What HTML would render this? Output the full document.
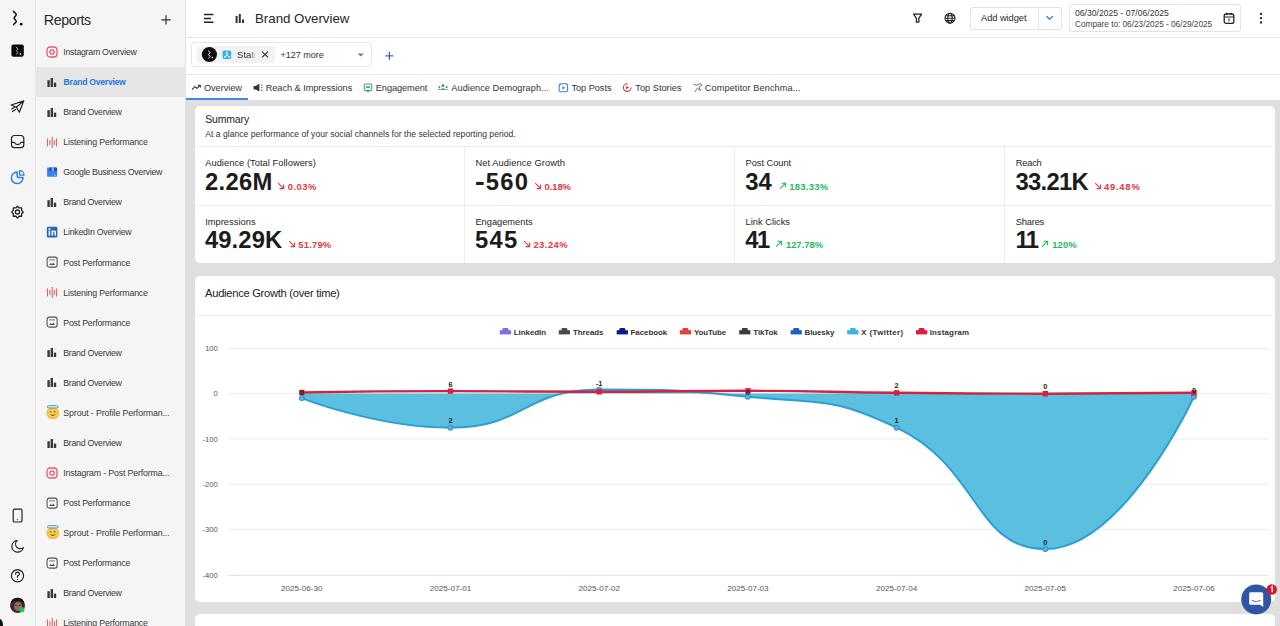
<!DOCTYPE html>
<html><head><meta charset="utf-8"><title>Brand Overview</title>
<style>
html,body{margin:0;padding:0;width:1280px;height:626px;overflow:hidden;background:#fff;font-family:"Liberation Sans", sans-serif;}
.t{position:absolute;white-space:nowrap;line-height:1;font-family:"Liberation Sans", sans-serif;}
</style></head><body>
<div style="position:absolute;left:0px;top:0px;width:35px;height:626px;background:#f5f5f5;"></div>
<div style="position:absolute;left:35px;top:0px;width:1px;height:626px;background:#e4e4e4;"></div>
<div style="position:absolute;left:36px;top:0px;width:150px;height:626px;background:#f5f5f5;"></div>
<div style="position:absolute;left:186px;top:0px;width:1094px;height:626px;background:#dfdfdf;"></div>
<div style="position:absolute;left:186px;top:0px;width:1094px;height:100px;background:#ffffff;"></div>
<div style="position:absolute;left:186px;top:37px;width:1094px;height:1px;background:#e6e6e6;"></div>
<div style="position:absolute;left:186px;top:74px;width:1094px;height:1px;background:#e6e6e6;"></div>
<div style="position:absolute;left:185px;top:0px;width:1px;height:626px;background:#e2e2e2;"></div>
<svg style="position:absolute;left:0;top:0" width="35" height="626" viewBox="0 0 35 626">
<path d="M13.5,11.4 L15.9,13.8 Q16.7,14.6 15.9,15.5 L14.4,17.2 Q13.7,18 14.4,18.8 L15.9,20.5 Q16.7,21.4 15.9,22.2 L13.6,24.6" fill="none" stroke="#111" stroke-width="1.5" stroke-linecap="round" stroke-linejoin="round"/>
<circle cx="21.2" cy="24.2" r="1.4" fill="#111"/>
<rect x="11.4" y="44.4" width="12.4" height="12.4" rx="2" fill="#0a0a0a"/>
<polyline points="16.2,47.2 18,49 16.4,50.8 18,52.6 16.3,54.2" fill="none" stroke="#aaa" stroke-width="1" stroke-linecap="round" stroke-linejoin="round"/>
<circle cx="20.4" cy="54" r="0.9" fill="#ccc"/>
<g fill="none" stroke="#222" stroke-width="1.2" stroke-linejoin="round" stroke-linecap="round">
 <path d="M23.8,100.9 L11.2,105 L16.4,107.3 L19.3,112.3 Z M16.4,107.3 L23.8,100.9"/>
 <path d="M11.8,109 L14.6,107.2 M12.4,111.6 L15.6,109.4"/>
 <rect x="11.5" y="135.5" width="12.3" height="12.2" rx="3"/>
 <path d="M11.6,142.4 H14.4 Q15.2,144.6 17.65,144.6 Q20.1,144.6 20.9,142.4 H23.7"/>
 <circle cx="17.47" cy="212.1" r="2.1" stroke-width="1.3"/>
 <path d="M17.47,206.20 L19.19,207.94 L21.64,207.93 L21.63,210.38 L23.37,212.10 L21.63,213.82 L21.64,216.27 L19.19,216.26 L17.47,218.00 L15.75,216.26 L13.30,216.27 L13.31,213.82 L11.57,212.10 L13.31,210.38 L13.30,207.93 L15.75,207.94Z" stroke-width="1.3"/>
 <rect x="13.2" y="509.2" width="8.8" height="12.8" rx="1.6"/>
 <path d="M17.2,540.6 A5.8,5.8 0 1 0 23.3,547.6 A4.6,4.6 0 0 1 17.2,540.6 Z" />
 <circle cx="17.5" cy="575.8" r="6.1"/>
 <path d="M15.6,574.2 Q15.6,572.2 17.5,572.2 Q19.4,572.2 19.4,574 Q19.4,575.4 17.5,576 V577.2"/>
</g>
<circle cx="17.5" cy="579.6" r="0.7" fill="#222"/>
<circle cx="17.6" cy="519.6" r="0.6" fill="#222"/>
<g fill="none" stroke="#2f7be6" stroke-width="1.5" stroke-linejoin="round">
 <path d="M17.2,172 V175.8 Q17.2,177.6 19,177.6 H23 A5.8,5.8 0 1 1 17.2,172 Z"/>
 <path d="M19.6,170.7 A4.4,4.4 0 0 1 24,175.1 H19.6 Z" stroke-width="1.3"/>
</g>
<circle cx="17.5" cy="605.4" r="7.5" fill="#3a2a28"/>
<ellipse cx="18" cy="606.4" rx="4" ry="4.6" fill="#9a6a5e"/>
<path d="M10.5,604 Q11.5,597.6 17.5,597.8 Q23.5,597.6 24.5,604 Q22.5,600.4 17.5,601 Q12.5,600.6 10.5,604Z" fill="#1e1512"/>
<path d="M14.8,605.6 h2 M18.6,605.6 h2" stroke="#3a2020" stroke-width="0.8"/>
<circle cx="21.8" cy="609.6" r="2.7" fill="#1fbf5c"/>
</svg>
<div class="t" id="T0" style="left:43.80px;top:12.88px;font-size:14.2px;font-weight:400;color:#2a2a2a;letter-spacing:-0.397px;">Reports</div>
<svg style="position:absolute;left:160px;top:14px" width="12" height="12"><path d="M6,1.2 V10.4 M1.4,5.8 H10.6" stroke="#333" stroke-width="1.2"/></svg>
<div style="position:absolute;left:36px;top:67px;width:150px;height:30px;background:#e6e6e6;"></div>
<svg style="position:absolute;left:46px;top:45.60px" width="12" height="12" viewBox="0 0 12 12"><rect x="1" y="1" width="10" height="10" rx="3" fill="none" stroke="#e25d72" stroke-width="1.3"/><circle cx="6" cy="6" r="2.2" fill="none" stroke="#e25d72" stroke-width="1.3"/></svg>
<div class="t" id="T1" style="left:63.30px;top:47.95px;font-size:8.8px;font-weight:400;color:#3a3a3a;letter-spacing:-0.274px;">Instagram Overview</div>
<svg style="position:absolute;left:46px;top:75.68px" width="12" height="12" viewBox="0 0 12 12"><rect x="1.4" y="4.2" width="2.4" height="6.8" fill="#3a3a3a"/><rect x="4.6" y="2" width="2.4" height="9" fill="#3a3a3a"/><rect x="7.8" y="6.6" width="2.4" height="4.4" fill="#3a3a3a"/></svg>
<div class="t" id="T2" style="left:63.60px;top:78.00px;font-size:8.6px;font-weight:700;color:#1f74dc;letter-spacing:-0.250px;">Brand Overview</div>
<svg style="position:absolute;left:46px;top:105.76px" width="12" height="12" viewBox="0 0 12 12"><rect x="1.4" y="4.2" width="2.4" height="6.8" fill="#3a3a3a"/><rect x="4.6" y="2" width="2.4" height="9" fill="#3a3a3a"/><rect x="7.8" y="6.6" width="2.4" height="4.4" fill="#3a3a3a"/></svg>
<div class="t" id="T3" style="left:63.30px;top:108.11px;font-size:8.8px;font-weight:400;color:#3a3a3a;letter-spacing:-0.302px;">Brand Overview</div>
<svg style="position:absolute;left:46px;top:135.84px" width="12" height="12" viewBox="0 0 12 12"><g stroke="#e4605e" stroke-width="1.05" stroke-linecap="round"><path d="M1.5,2.8 V10"/><path d="M3.9,4.6 V8.4"/><path d="M6.2,1.2 V11.6"/><path d="M8.4,4.6 V8.4"/><path d="M10.6,2.8 V10"/></g></svg>
<div class="t" id="T4" style="left:63.30px;top:138.19px;font-size:8.8px;font-weight:400;color:#3a3a3a;letter-spacing:-0.166px;">Listening Performance</div>
<svg style="position:absolute;left:46px;top:165.92px" width="12" height="12" viewBox="0 0 12 12"><rect x="1.1" y="1.6" width="10" height="9.2" rx="0.8" fill="#3b80e8"/><path d="M3.4,1.6 h2.3 v3.2 q-1.15,1.2 -2.3,0Z" fill="#2451b8"/><path d="M5.7,1.6 h2.3 v3.2 q-1.15,1.2 -2.3,0Z" fill="#6ea6f4"/><path d="M8,1.6 h2.3 q0.8,0.4 0.8,1.2 v2 q-1.5,1.2 -3.1,0Z" fill="#2451b8"/><path d="M8.2,8.2 q0.6,1.2 1.6,1.4" stroke="#cfe0fb" stroke-width="0.7" fill="none"/></svg>
<div class="t" id="T5" style="left:63.30px;top:168.27px;font-size:8.8px;font-weight:400;color:#3a3a3a;letter-spacing:-0.285px;">Google Business Overview</div>
<svg style="position:absolute;left:46px;top:196.00px" width="12" height="12" viewBox="0 0 12 12"><rect x="1.4" y="4.2" width="2.4" height="6.8" fill="#3a3a3a"/><rect x="4.6" y="2" width="2.4" height="9" fill="#3a3a3a"/><rect x="7.8" y="6.6" width="2.4" height="4.4" fill="#3a3a3a"/></svg>
<div class="t" id="T6" style="left:63.30px;top:198.35px;font-size:8.8px;font-weight:400;color:#3a3a3a;letter-spacing:-0.302px;">Brand Overview</div>
<svg style="position:absolute;left:46px;top:226.08px" width="12" height="12" viewBox="0 0 12 12"><rect x="0.8" y="0.8" width="10.6" height="10.6" rx="1.2" fill="#2a66b8"/><rect x="2.6" y="4.6" width="1.6" height="5" fill="#fff"/><circle cx="3.4" cy="3" r="0.95" fill="#fff"/><path d="M5.6,9.6 V4.6 H7 V5.4 Q7.6,4.4 8.8,4.5 Q10,4.6 10,6.2 V9.6 H8.5 V6.6 Q8.5,5.8 7.8,5.8 Q7.1,5.8 7.1,6.8 V9.6Z" fill="#fff"/></svg>
<div class="t" id="T7" style="left:63.30px;top:228.43px;font-size:8.8px;font-weight:400;color:#3a3a3a;letter-spacing:-0.251px;">LinkedIn Overview</div>
<svg style="position:absolute;left:46px;top:256.16px" width="12" height="12" viewBox="0 0 12 12"><rect x="1.1" y="1.1" width="10" height="10" rx="2.2" fill="none" stroke="#505050" stroke-width="1.05"/><path d="M3.2,3.9 H9" stroke="#666" stroke-width="0.9"/><path d="M3.2,9.1 L4.8,7 L6,8.2 L7.2,6.6 L9,9.1Z" fill="#505050"/></svg>
<div class="t" id="T8" style="left:63.30px;top:258.51px;font-size:8.8px;font-weight:400;color:#3a3a3a;letter-spacing:-0.228px;">Post Performance</div>
<svg style="position:absolute;left:46px;top:286.24px" width="12" height="12" viewBox="0 0 12 12"><g stroke="#e4605e" stroke-width="1.05" stroke-linecap="round"><path d="M1.5,2.8 V10"/><path d="M3.9,4.6 V8.4"/><path d="M6.2,1.2 V11.6"/><path d="M8.4,4.6 V8.4"/><path d="M10.6,2.8 V10"/></g></svg>
<div class="t" id="T9" style="left:63.30px;top:288.59px;font-size:8.8px;font-weight:400;color:#3a3a3a;letter-spacing:-0.166px;">Listening Performance</div>
<svg style="position:absolute;left:46px;top:316.32px" width="12" height="12" viewBox="0 0 12 12"><rect x="1.1" y="1.1" width="10" height="10" rx="2.2" fill="none" stroke="#505050" stroke-width="1.05"/><path d="M3.2,3.9 H9" stroke="#666" stroke-width="0.9"/><path d="M3.2,9.1 L4.8,7 L6,8.2 L7.2,6.6 L9,9.1Z" fill="#505050"/></svg>
<div class="t" id="T10" style="left:63.30px;top:318.67px;font-size:8.8px;font-weight:400;color:#3a3a3a;letter-spacing:-0.228px;">Post Performance</div>
<svg style="position:absolute;left:46px;top:346.40px" width="12" height="12" viewBox="0 0 12 12"><rect x="1.4" y="4.2" width="2.4" height="6.8" fill="#3a3a3a"/><rect x="4.6" y="2" width="2.4" height="9" fill="#3a3a3a"/><rect x="7.8" y="6.6" width="2.4" height="4.4" fill="#3a3a3a"/></svg>
<div class="t" id="T11" style="left:63.30px;top:348.75px;font-size:8.8px;font-weight:400;color:#3a3a3a;letter-spacing:-0.302px;">Brand Overview</div>
<svg style="position:absolute;left:46px;top:376.48px" width="12" height="12" viewBox="0 0 12 12"><rect x="1.4" y="4.2" width="2.4" height="6.8" fill="#3a3a3a"/><rect x="4.6" y="2" width="2.4" height="9" fill="#3a3a3a"/><rect x="7.8" y="6.6" width="2.4" height="4.4" fill="#3a3a3a"/></svg>
<div class="t" id="T12" style="left:63.30px;top:378.83px;font-size:8.8px;font-weight:400;color:#3a3a3a;letter-spacing:-0.302px;">Brand Overview</div>
<svg style="position:absolute;left:45.8px;top:404.96px" width="13.6" height="13.6" viewBox="0 0 12 12"><circle cx="6" cy="7" r="5.6" fill="#f2b736"/><circle cx="6" cy="6.6" r="5" fill="#f8c94e"/><ellipse cx="6" cy="1.6" rx="4.8" ry="1.3" fill="none" stroke="#5aa8f0" stroke-width="1"/><path d="M3.2,6.2 Q4.1,5.3 5,6.2 M7,6.2 Q7.9,5.3 8.8,6.2" stroke="#6b4a10" stroke-width="0.7" fill="none"/><path d="M3.4,8.2 Q6,11 8.6,8.2 Q6,9.2 3.4,8.2Z" fill="#6b4a10"/></svg>
<div class="t" id="T13" style="left:63.30px;top:408.91px;font-size:8.8px;font-weight:400;color:#3a3a3a;letter-spacing:-0.113px;">Sprout - Profile Performan...</div>
<svg style="position:absolute;left:46px;top:436.64px" width="12" height="12" viewBox="0 0 12 12"><rect x="1.4" y="4.2" width="2.4" height="6.8" fill="#3a3a3a"/><rect x="4.6" y="2" width="2.4" height="9" fill="#3a3a3a"/><rect x="7.8" y="6.6" width="2.4" height="4.4" fill="#3a3a3a"/></svg>
<div class="t" id="T14" style="left:63.30px;top:438.99px;font-size:8.8px;font-weight:400;color:#3a3a3a;letter-spacing:-0.302px;">Brand Overview</div>
<svg style="position:absolute;left:46px;top:466.72px" width="12" height="12" viewBox="0 0 12 12"><rect x="1" y="1" width="10" height="10" rx="3" fill="none" stroke="#e25d72" stroke-width="1.3"/><circle cx="6" cy="6" r="2.2" fill="none" stroke="#e25d72" stroke-width="1.3"/></svg>
<div class="t" id="T15" style="left:63.30px;top:469.07px;font-size:8.8px;font-weight:400;color:#3a3a3a;letter-spacing:-0.157px;">Instagram - Post Performa...</div>
<svg style="position:absolute;left:46px;top:496.80px" width="12" height="12" viewBox="0 0 12 12"><rect x="1.1" y="1.1" width="10" height="10" rx="2.2" fill="none" stroke="#505050" stroke-width="1.05"/><path d="M3.2,3.9 H9" stroke="#666" stroke-width="0.9"/><path d="M3.2,9.1 L4.8,7 L6,8.2 L7.2,6.6 L9,9.1Z" fill="#505050"/></svg>
<div class="t" id="T16" style="left:63.30px;top:499.15px;font-size:8.8px;font-weight:400;color:#3a3a3a;letter-spacing:-0.228px;">Post Performance</div>
<svg style="position:absolute;left:45.8px;top:525.28px" width="13.6" height="13.6" viewBox="0 0 12 12"><circle cx="6" cy="7" r="5.6" fill="#f2b736"/><circle cx="6" cy="6.6" r="5" fill="#f8c94e"/><ellipse cx="6" cy="1.6" rx="4.8" ry="1.3" fill="none" stroke="#5aa8f0" stroke-width="1"/><path d="M3.2,6.2 Q4.1,5.3 5,6.2 M7,6.2 Q7.9,5.3 8.8,6.2" stroke="#6b4a10" stroke-width="0.7" fill="none"/><path d="M3.4,8.2 Q6,11 8.6,8.2 Q6,9.2 3.4,8.2Z" fill="#6b4a10"/></svg>
<div class="t" id="T17" style="left:63.30px;top:529.23px;font-size:8.8px;font-weight:400;color:#3a3a3a;letter-spacing:-0.113px;">Sprout - Profile Performan...</div>
<svg style="position:absolute;left:46px;top:556.96px" width="12" height="12" viewBox="0 0 12 12"><rect x="1.1" y="1.1" width="10" height="10" rx="2.2" fill="none" stroke="#505050" stroke-width="1.05"/><path d="M3.2,3.9 H9" stroke="#666" stroke-width="0.9"/><path d="M3.2,9.1 L4.8,7 L6,8.2 L7.2,6.6 L9,9.1Z" fill="#505050"/></svg>
<div class="t" id="T18" style="left:63.30px;top:559.31px;font-size:8.8px;font-weight:400;color:#3a3a3a;letter-spacing:-0.228px;">Post Performance</div>
<svg style="position:absolute;left:46px;top:587.04px" width="12" height="12" viewBox="0 0 12 12"><rect x="1.4" y="4.2" width="2.4" height="6.8" fill="#3a3a3a"/><rect x="4.6" y="2" width="2.4" height="9" fill="#3a3a3a"/><rect x="7.8" y="6.6" width="2.4" height="4.4" fill="#3a3a3a"/></svg>
<div class="t" id="T19" style="left:63.30px;top:589.39px;font-size:8.8px;font-weight:400;color:#3a3a3a;letter-spacing:-0.302px;">Brand Overview</div>
<svg style="position:absolute;left:46px;top:617.12px" width="12" height="12" viewBox="0 0 12 12"><g stroke="#e4605e" stroke-width="1.05" stroke-linecap="round"><path d="M1.5,2.8 V10"/><path d="M3.9,4.6 V8.4"/><path d="M6.2,1.2 V11.6"/><path d="M8.4,4.6 V8.4"/><path d="M10.6,2.8 V10"/></g></svg>
<div class="t" id="T20" style="left:63.30px;top:619.47px;font-size:8.8px;font-weight:400;color:#3a3a3a;letter-spacing:-0.166px;">Listening Performance</div>
<svg style="position:absolute;left:200px;top:10px" width="18" height="16"><path d="M4,4.6 H13.4 M4,8.4 H11 M4,12.2 H13.4" stroke="#222" stroke-width="1.5"/></svg>
<svg style="position:absolute;left:234px;top:13px" width="12" height="11"><rect x="1.6" y="3" width="2" height="7" fill="#333"/><rect x="4.8" y="1" width="2" height="9" fill="#333"/><rect x="8" y="6.4" width="2" height="3.6" fill="#333"/></svg>
<div class="t" id="T21" style="left:255.00px;top:11.54px;font-size:13.3px;font-weight:400;color:#262626;letter-spacing:-0.014px;">Brand Overview</div>
<svg style="position:absolute;left:908px;top:8px" width="60" height="20">
<path d="M5.6,6.2 H13.6 L10.8,10.4 V14.2 H8.4 V10.4 Z" fill="none" stroke="#222" stroke-width="1.3" stroke-linejoin="round"/>
<g transform="translate(42,10.2)" fill="none" stroke="#222" stroke-width="1.1">
<circle r="5"/><ellipse rx="2.2" ry="5"/><path d="M-5,0 H5 M-4.4,-2.4 H4.4 M-4.4,2.4 H4.4"/>
</g></svg>
<div style="position:absolute;left:970px;top:7px;width:92px;height:23px;background:#fff;border:1px solid #e3e3e3;border-radius:3px;box-sizing:border-box;"></div>
<div style="position:absolute;left:1037.5px;top:7.5px;width:1px;height:21.5px;background:#e3e3e3;"></div>
<div class="t" id="T22" style="left:981.00px;top:14.33px;font-size:9.3px;font-weight:400;color:#2a2a2a;letter-spacing:-0.057px;">Add widget</div>
<svg style="position:absolute;left:1044px;top:14px" width="12" height="8"><path d="M2.4,2.2 L5.6,5.2 L8.8,2.2" fill="none" stroke="#3b6dc2" stroke-width="1.2"/></svg>
<div style="position:absolute;left:1069px;top:4px;width:172px;height:28px;background:#fff;border:1px solid #e3e3e3;border-radius:3px;box-sizing:border-box;"></div>
<div class="t" id="T23" style="left:1075.00px;top:8.92px;font-size:8.6px;font-weight:400;color:#333;letter-spacing:0.005px;">06/30/2025 - 07/06/2025</div>
<div class="t" id="T24" style="left:1075.00px;top:20.72px;font-size:8.25px;font-weight:400;color:#444;letter-spacing:-0.012px;">Compare to: 06/23/2025 - 06/29/2025</div>
<svg style="position:absolute;left:1222px;top:11px" width="14" height="14">
<rect x="2.2" y="3" width="9.6" height="9.4" rx="2" fill="none" stroke="#222" stroke-width="1.3"/>
<path d="M2.4,6 H11.6 M4.8,1.8 V4 M9.2,1.8 V4" stroke="#222" stroke-width="1.2"/>
<path d="M7,7.4 V10.4" stroke="#222" stroke-width="1"/></svg>
<svg style="position:absolute;left:1256px;top:10px" width="10" height="16"><circle cx="5" cy="3.9" r="1.15" fill="#222"/><circle cx="5" cy="8.2" r="1.15" fill="#222"/><circle cx="5" cy="12.5" r="1.15" fill="#222"/></svg>
<div style="position:absolute;left:191px;top:42px;width:181px;height:25px;background:#fff;border:1px solid #e6e6e6;border-radius:4px;box-sizing:border-box;"></div>
<div style="position:absolute;left:197px;top:46px;width:78px;height:17px;background:#f3f3f3;border-radius:3px;"></div>
<svg style="position:absolute;left:200px;top:45px" width="80" height="20">
<circle cx="9.4" cy="9.5" r="7.6" fill="#0d0d0d"/>
<polyline points="8.2,5.8 10.2,7.6 8.4,9.6 10.2,11.4 8.3,13.2" fill="none" stroke="#fff" stroke-width="1" stroke-linejoin="round"/>
<circle cx="12.4" cy="12.6" r="0.8" fill="#fff"/>
<rect x="22.6" y="5.6" width="8.6" height="8.4" rx="1.6" fill="#2cb4f2"/>
<path d="M26.9,7.6 V9.8 M26.9,9.8 L24.8,11.8 M26.9,9.8 L29,11.8" fill="none" stroke="#fff" stroke-width="0.9"/>
<circle cx="26.9" cy="7.6" r="0.9" fill="#fff"/><circle cx="24.8" cy="11.8" r="0.9" fill="#fff"/><circle cx="29" cy="11.8" r="0.9" fill="#fff"/>
<path d="M62,6.6 L68,12.4 M68,6.6 L62,12.4" stroke="#333" stroke-width="1.1"/>
</svg>
<div class="t" style="left:237px;top:47.6px;font-size:9.6px;color:#2e2e2e;width:19px;overflow:hidden;line-height:14px;-webkit-mask-image:linear-gradient(90deg,#000 70%,transparent)">Status</div>
<div class="t" id="T25" style="left:280.40px;top:50.90px;font-size:9.1px;font-weight:400;color:#333;letter-spacing:-0.034px;">+127 more</div>
<svg style="position:absolute;left:355px;top:51px" width="12" height="8"><path d="M2.6,2.4 H8.8 L5.7,5.6Z" fill="#777"/></svg>
<svg style="position:absolute;left:382px;top:49px" width="14" height="14"><path d="M7.4,2.8 V10.8 M3.4,6.8 H11.4" stroke="#3f66c0" stroke-width="1.3"/></svg>
<div class="t" id="T26" style="left:203.90px;top:83.81px;font-size:9.2px;font-weight:400;color:#333;letter-spacing:-0.036px;">Overview</div>
<div class="t" id="T27" style="left:265.70px;top:83.81px;font-size:9.2px;font-weight:400;color:#333;letter-spacing:-0.040px;">Reach &amp; Impressions</div>
<div class="t" id="T28" style="left:375.80px;top:83.81px;font-size:9.2px;font-weight:400;color:#333;letter-spacing:-0.061px;">Engagement</div>
<div class="t" id="T29" style="left:451.30px;top:83.81px;font-size:9.2px;font-weight:400;color:#333;letter-spacing:0.051px;">Audience Demograph...</div>
<div class="t" id="T30" style="left:571.50px;top:83.81px;font-size:9.2px;font-weight:400;color:#333;letter-spacing:-0.044px;">Top Posts</div>
<div class="t" id="T31" style="left:635.30px;top:83.81px;font-size:9.2px;font-weight:400;color:#333;letter-spacing:0.024px;">Top Stories</div>
<div class="t" id="T32" style="left:704.80px;top:83.81px;font-size:9.2px;font-weight:400;color:#333;letter-spacing:0.090px;">Competitor Benchma...</div>
<svg style="position:absolute;left:186px;top:78px" width="640" height="20" viewBox="186 78 640 20">
<path d="M192,89.6 L195,86.6 L197,88.4 L200.2,85.4 M198,85.4 H200.4 V87.6" fill="none" stroke="#333" stroke-width="1.1" stroke-linejoin="round"/>
<path d="M253.6,86 H255.6 L259.4,83.8 V91.6 L255.6,89.4 H253.6Z" fill="#333"/><path d="M261,85.4 L262.2,84.8 M261.2,87.7 H262.6 M261,90 L262.2,90.6" stroke="#333" stroke-width="0.9"/>
<rect x="364.2" y="84" width="7.6" height="6.6" rx="1.4" fill="none" stroke="#3daa6a" stroke-width="1.1"/><path d="M366.6,90.6 L368,92 L369.4,90.6" fill="none" stroke="#3daa6a" stroke-width="1"/><rect x="366.2" y="86.2" width="3.6" height="2" fill="#3daa6a"/>
<g fill="#3d8f63"><circle cx="443" cy="85.6" r="1.4"/><path d="M440.4,90 Q443,86.4 445.6,90Z"/><circle cx="439.4" cy="87" r="1"/><circle cx="446.6" cy="87" r="1"/><path d="M437.6,90 Q439.4,87.8 440.8,89.4Z M445.2,89.4 Q446.6,87.8 448.4,90Z"/></g>
<rect x="559.2" y="83.8" width="8.4" height="8" rx="1.8" fill="none" stroke="#3b82d4" stroke-width="1.1"/><path d="M562.4,86.2 L565.4,87.8 L562.4,89.6Z" fill="#3b82d4"/><path d="M560.6,83.8 V85 M566.2,83.8 V85" stroke="#3b82d4" stroke-width="0.9"/>
<circle cx="627.2" cy="87.6" r="3.8" fill="none" stroke="#e0373a" stroke-width="1.1" stroke-dasharray="18 5"/><path d="M626.2,85.8 L629,87.6 L626.2,89.4Z" fill="#e0373a"/>
<path d="M693.6,84.4 L697,85.2 L700,83.6 L702,85 L698.8,87.2 L700.6,90.6 L697.2,88.4 L694.6,92" fill="none" stroke="#777" stroke-width="1"/>
</svg>
<div style="position:absolute;left:186px;top:97.7px;width:61.5px;height:2.2px;background:#3d8ae5;"></div>
<div style="position:absolute;left:195px;top:106.3px;width:1080px;height:156.7px;background:#fff;border-radius:5px;"></div>
<div class="t" id="T33" style="left:205.20px;top:115.15px;font-size:10.45px;font-weight:400;color:#1e1e1e;letter-spacing:-0.123px;">Summary</div>
<div class="t" id="T34" style="left:205.20px;top:129.52px;font-size:8.6px;font-weight:400;color:#333;letter-spacing:0.012px;">At a glance performance of your social channels for the selected reporting period.</div>
<div style="position:absolute;left:195px;top:146px;width:1080px;height:1px;background:#ececec;"></div>
<div style="position:absolute;left:195px;top:205px;width:1080px;height:1px;background:#ececec;"></div>
<div style="position:absolute;left:464px;top:146.5px;width:1px;height:116.5px;background:#ececec;"></div>
<div style="position:absolute;left:734px;top:146.5px;width:1px;height:116.5px;background:#ececec;"></div>
<div style="position:absolute;left:1004px;top:146.5px;width:1px;height:116.5px;background:#ececec;"></div>
<div class="t" id="T35" style="left:205.20px;top:159.03px;font-size:9.3px;font-weight:400;color:#262626;letter-spacing:0.042px;">Audience (Total Followers)</div>
<div class="t" id="T36" style="left:204.90px;top:169.75px;font-size:23.8px;font-weight:700;color:#1c1c1c;letter-spacing:0.321px;">2.26M</div>
<svg style="position:absolute;left:277.0px;top:182.1px" width="9" height="9"><path d="M1.2,1.2 L6.6,6.6 M2.6,6.6 H6.6 V2.6" fill="none" stroke="#e1373d" stroke-width="1.1"/></svg>
<div class="t" id="T37" style="left:287.80px;top:181.54px;font-size:9.4px;font-weight:700;color:#e1373d;letter-spacing:0.488px;">0.03%</div>
<div class="t" id="T38" style="left:475.40px;top:159.03px;font-size:9.3px;font-weight:400;color:#262626;letter-spacing:0.089px;">Net Audience Growth</div>
<div class="t" id="T39" style="left:475.10px;top:169.75px;font-size:23.8px;font-weight:700;color:#1c1c1c;letter-spacing:1.300px;"><span style="display:inline-block;transform:scale(1.25,1.1);transform-origin:0 70%;margin-right:1.4px">-</span>560</div>
<svg style="position:absolute;left:533.8px;top:182.1px" width="9" height="9"><path d="M1.2,1.2 L6.6,6.6 M2.6,6.6 H6.6 V2.6" fill="none" stroke="#e1373d" stroke-width="1.1"/></svg>
<div class="t" id="T40" style="left:544.50px;top:181.54px;font-size:9.4px;font-weight:700;color:#e1373d;letter-spacing:-0.037px;">0.18%</div>
<div class="t" id="T41" style="left:745.60px;top:159.03px;font-size:9.3px;font-weight:400;color:#262626;letter-spacing:-0.046px;">Post Count</div>
<div class="t" id="T42" style="left:745.30px;top:169.75px;font-size:23.8px;font-weight:700;color:#1c1c1c;letter-spacing:-0.135px;">34</div>
<svg style="position:absolute;left:778.6px;top:182.1px" width="9" height="9"><path d="M1.2,6.6 L6.6,1.2 M2.6,1.2 H6.6 V5.2" fill="none" stroke="#1fb866" stroke-width="1.1"/></svg>
<div class="t" id="T43" style="left:789.30px;top:181.54px;font-size:9.4px;font-weight:700;color:#1fb866;letter-spacing:0.304px;">183.33%</div>
<div class="t" id="T44" style="left:1015.80px;top:159.03px;font-size:9.3px;font-weight:400;color:#262626;letter-spacing:-0.226px;">Reach</div>
<div class="t" id="T45" style="left:1015.50px;top:169.75px;font-size:23.8px;font-weight:700;color:#1c1c1c;letter-spacing:-0.710px;">33.21K</div>
<svg style="position:absolute;left:1094.0px;top:182.1px" width="9" height="9"><path d="M1.2,1.2 L6.6,6.6 M2.6,6.6 H6.6 V2.6" fill="none" stroke="#e1373d" stroke-width="1.1"/></svg>
<div class="t" id="T46" style="left:1103.90px;top:181.54px;font-size:9.4px;font-weight:700;color:#e1373d;letter-spacing:0.808px;">49.48%</div>
<div class="t" id="T47" style="left:205.20px;top:218.03px;font-size:9.3px;font-weight:400;color:#262626;letter-spacing:0.023px;">Impressions</div>
<div class="t" id="T48" style="left:204.90px;top:227.75px;font-size:23.8px;font-weight:700;color:#1c1c1c;letter-spacing:0.130px;">49.29K</div>
<svg style="position:absolute;left:288.0px;top:240.1px" width="9" height="9"><path d="M1.2,1.2 L6.6,6.6 M2.6,6.6 H6.6 V2.6" fill="none" stroke="#e1373d" stroke-width="1.1"/></svg>
<div class="t" id="T49" style="left:298.30px;top:239.54px;font-size:9.4px;font-weight:700;color:#e1373d;letter-spacing:0.208px;">51.79%</div>
<div class="t" id="T50" style="left:475.40px;top:218.03px;font-size:9.3px;font-weight:400;color:#262626;letter-spacing:-0.012px;">Engagements</div>
<div class="t" id="T51" style="left:475.10px;top:227.75px;font-size:23.8px;font-weight:700;color:#1c1c1c;letter-spacing:1.165px;">545</div>
<svg style="position:absolute;left:523.0px;top:240.1px" width="9" height="9"><path d="M1.2,1.2 L6.6,6.6 M2.6,6.6 H6.6 V2.6" fill="none" stroke="#e1373d" stroke-width="1.1"/></svg>
<div class="t" id="T52" style="left:533.40px;top:239.54px;font-size:9.4px;font-weight:700;color:#e1373d;letter-spacing:0.488px;">23.24%</div>
<div class="t" id="T53" style="left:745.60px;top:218.03px;font-size:9.3px;font-weight:400;color:#262626;letter-spacing:-0.008px;">Link Clicks</div>
<div class="t" id="T54" style="left:745.30px;top:227.75px;font-size:23.8px;font-weight:700;color:#1c1c1c;letter-spacing:-1.600px;">41</div>
<svg style="position:absolute;left:774.7px;top:240.1px" width="9" height="9"><path d="M1.2,6.6 L6.6,1.2 M2.6,1.2 H6.6 V5.2" fill="none" stroke="#1fb866" stroke-width="1.1"/></svg>
<div class="t" id="T55" style="left:785.90px;top:239.54px;font-size:9.4px;font-weight:700;color:#1fb866;letter-spacing:0.021px;">127.78%</div>
<div class="t" id="T56" style="left:1015.80px;top:218.03px;font-size:9.3px;font-weight:400;color:#262626;letter-spacing:-0.202px;">Shares</div>
<div class="t" id="T57" style="left:1015.50px;top:227.75px;font-size:23.8px;font-weight:700;color:#1c1c1c;letter-spacing:-1.600px;">11</div>
<svg style="position:absolute;left:1041.3px;top:240.1px" width="9" height="9"><path d="M1.2,6.6 L6.6,1.2 M2.6,1.2 H6.6 V5.2" fill="none" stroke="#1fb866" stroke-width="1.1"/></svg>
<div class="t" id="T58" style="left:1052.30px;top:239.54px;font-size:9.4px;font-weight:700;color:#1fb866;letter-spacing:0.086px;">120%</div>
<div style="position:absolute;left:195px;top:276px;width:1080px;height:325.5px;background:#fff;border-radius:5px;"></div>
<div class="t" id="T59" style="left:205.10px;top:288.02px;font-size:11.2px;font-weight:400;color:#222;letter-spacing:-0.295px;">Audience Growth (over time)</div>
<div style="position:absolute;left:195px;top:315px;width:1080px;height:1px;background:#ececec;"></div>
<div style="position:absolute;left:195px;top:614px;width:1080px;height:20px;background:#fff;border-radius:5px;"></div>
<svg style="position:absolute;left:0;top:0" width="1280" height="626" viewBox="0 0 1280 626">
<rect x="499.8" y="330.2" width="11.2" height="4.2" fill="#7b6cf0"/><rect x="502.40000000000003" y="328" width="6" height="3" rx="1.2" fill="#7b6cf0"/>
<rect x="558.8" y="330.2" width="11.2" height="4.2" fill="#4a4a4a"/><rect x="561.4" y="328" width="6" height="3" rx="1.2" fill="#4a4a4a"/>
<rect x="616.7" y="330.2" width="11.2" height="4.2" fill="#0b1a8a"/><rect x="619.3000000000001" y="328" width="6" height="3" rx="1.2" fill="#0b1a8a"/>
<rect x="679.8" y="330.2" width="11.2" height="4.2" fill="#e2403f"/><rect x="682.4" y="328" width="6" height="3" rx="1.2" fill="#e2403f"/>
<rect x="739.2" y="330.2" width="11.2" height="4.2" fill="#3a3a3a"/><rect x="741.8000000000001" y="328" width="6" height="3" rx="1.2" fill="#3a3a3a"/>
<rect x="790.6" y="330.2" width="11.2" height="4.2" fill="#1f5fc0"/><rect x="793.2" y="328" width="6" height="3" rx="1.2" fill="#1f5fc0"/>
<rect x="847.2" y="330.2" width="11.2" height="4.2" fill="#3bb3e3"/><rect x="849.8000000000001" y="328" width="6" height="3" rx="1.2" fill="#3bb3e3"/>
<rect x="916" y="330.2" width="11.2" height="4.2" fill="#d81c3c"/><rect x="918.6" y="328" width="6" height="3" rx="1.2" fill="#d81c3c"/>
<rect x="227.7" y="348.1" width="1041.3" height="1" fill="#ececec"/>
<rect x="227.7" y="393.1" width="1041.3" height="1" fill="#ececec"/>
<rect x="227.7" y="438.4" width="1041.3" height="1" fill="#ececec"/>
<rect x="227.7" y="483.7" width="1041.3" height="1" fill="#ececec"/>
<rect x="227.7" y="528.9" width="1041.3" height="1" fill="#ececec"/>
<rect x="227.7" y="574.8" width="1041.3" height="1" fill="#d8e1f0"/>
<path d="M301.80,398.10 C301.80,398.10 376.61,427.70 450.50,427.70 C525.31,427.70 523.71,389.60 599.20,389.60 C672.41,389.60 674.30,389.60 747.90,396.70 C823.00,403.94 830.91,396.70 896.60,427.70 C979.61,466.88 974.80,549.10 1045.30,549.10 C1123.50,549.10 1194.00,396.70 1194.00,396.70 L1194.00,393.6 L301.80,393.6 Z" fill="#5bc0e0"/>
<path d="M301.80,398.10 C301.80,398.10 376.61,427.70 450.50,427.70 C525.31,427.70 523.71,389.60 599.20,389.60 C672.41,389.60 674.30,389.60 747.90,396.70 C823.00,403.94 830.91,396.70 896.60,427.70 C979.61,466.88 974.80,549.10 1045.30,549.10 C1123.50,549.10 1194.00,396.70 1194.00,396.70" fill="none" stroke="#2a9ed6" stroke-width="2"/>
<path d="M301.80,392.50 C301.80,392.50 376.15,391.10 450.50,391.10 C524.85,391.10 524.85,391.80 599.20,391.80 C673.55,391.80 673.55,390.80 747.90,390.80 C822.25,390.80 822.25,392.07 896.60,392.80 C970.95,393.52 970.95,393.70 1045.30,393.70 C1119.65,393.70 1194.00,392.80 1194.00,392.80" fill="none" stroke="#d42240" stroke-width="2.4"/>
<circle cx="301.80" cy="398.1" r="2.6" fill="#4fb6e0" stroke="#2a7fc8" stroke-width="0.8"/>
<circle cx="450.50" cy="427.7" r="2.6" fill="#4fb6e0" stroke="#2a7fc8" stroke-width="0.8"/>
<circle cx="599.20" cy="389.6" r="2.6" fill="#4fb6e0" stroke="#2a7fc8" stroke-width="0.8"/>
<circle cx="747.90" cy="396.7" r="2.6" fill="#4fb6e0" stroke="#2a7fc8" stroke-width="0.8"/>
<circle cx="896.60" cy="427.7" r="2.6" fill="#4fb6e0" stroke="#2a7fc8" stroke-width="0.8"/>
<circle cx="1045.30" cy="549.1" r="2.6" fill="#4fb6e0" stroke="#2a7fc8" stroke-width="0.8"/>
<circle cx="1194.00" cy="396.7" r="2.6" fill="#4fb6e0" stroke="#2a7fc8" stroke-width="0.8"/>
<rect x="299.10" y="389.8" width="5.4" height="5.4" fill="#d7223f"/>
<rect x="447.80" y="388.40000000000003" width="5.4" height="5.4" fill="#d7223f"/>
<rect x="596.50" y="389.1" width="5.4" height="5.4" fill="#d7223f"/>
<rect x="745.20" y="388.1" width="5.4" height="5.4" fill="#d7223f"/>
<rect x="893.90" y="390.1" width="5.4" height="5.4" fill="#d7223f"/>
<rect x="1042.60" y="391.0" width="5.4" height="5.4" fill="#d7223f"/>
<rect x="1191.30" y="390.1" width="5.4" height="5.4" fill="#d7223f"/>
<text x="301.80" y="395.2" font-size="7.4" font-weight="700" fill="#222" text-anchor="middle" font-family="Liberation Sans">0</text>
<text x="450.50" y="386.6" font-size="7.4" font-weight="700" fill="#222" text-anchor="middle" font-family="Liberation Sans">6</text>
<text x="450.50" y="423.0" font-size="7.4" font-weight="700" fill="#222" text-anchor="middle" font-family="Liberation Sans">2</text>
<text x="599.20" y="386.0" font-size="7.4" font-weight="700" fill="#222" text-anchor="middle" font-family="Liberation Sans">-1</text>
<text x="747.90" y="394.5" font-size="7.4" font-weight="700" fill="#222" text-anchor="middle" font-family="Liberation Sans">0</text>
<text x="896.60" y="388.3" font-size="7.4" font-weight="700" fill="#222" text-anchor="middle" font-family="Liberation Sans">2</text>
<text x="896.60" y="423.3" font-size="7.4" font-weight="700" fill="#222" text-anchor="middle" font-family="Liberation Sans">1</text>
<text x="1045.30" y="389.2" font-size="7.4" font-weight="700" fill="#222" text-anchor="middle" font-family="Liberation Sans">0</text>
<text x="1045.30" y="544.6" font-size="7.4" font-weight="700" fill="#222" text-anchor="middle" font-family="Liberation Sans">0</text>
<text x="1194.00" y="392.6" font-size="7.4" font-weight="700" fill="#222" text-anchor="middle" font-family="Liberation Sans">0</text>
<text x="217.8" y="351.3" font-size="7.6" fill="#555" text-anchor="end" font-family="Liberation Sans">100</text>
<text x="217.8" y="396.3" font-size="7.6" fill="#555" text-anchor="end" font-family="Liberation Sans">0</text>
<text x="217.8" y="441.6" font-size="7.6" fill="#555" text-anchor="end" font-family="Liberation Sans">-100</text>
<text x="217.8" y="486.9" font-size="7.6" fill="#555" text-anchor="end" font-family="Liberation Sans">-200</text>
<text x="217.8" y="532.1" font-size="7.6" fill="#555" text-anchor="end" font-family="Liberation Sans">-300</text>
<text x="217.8" y="578.0" font-size="7.6" fill="#555" text-anchor="end" font-family="Liberation Sans">-400</text>
<text x="301.80" y="591" font-size="8.1" fill="#555" text-anchor="middle" font-family="Liberation Sans">2025-06-30</text>
<text x="450.50" y="591" font-size="8.1" fill="#555" text-anchor="middle" font-family="Liberation Sans">2025-07-01</text>
<text x="599.20" y="591" font-size="8.1" fill="#555" text-anchor="middle" font-family="Liberation Sans">2025-07-02</text>
<text x="747.90" y="591" font-size="8.1" fill="#555" text-anchor="middle" font-family="Liberation Sans">2025-07-03</text>
<text x="896.60" y="591" font-size="8.1" fill="#555" text-anchor="middle" font-family="Liberation Sans">2025-07-04</text>
<text x="1045.30" y="591" font-size="8.1" fill="#555" text-anchor="middle" font-family="Liberation Sans">2025-07-05</text>
<text x="1194.00" y="591" font-size="8.1" fill="#555" text-anchor="middle" font-family="Liberation Sans">2025-07-06</text>
</svg>
<div class="t" id="T60" style="left:513.80px;top:328.51px;font-size:7.9px;font-weight:700;color:#333;letter-spacing:-0.017px;">LinkedIn</div>
<div class="t" id="T61" style="left:573.00px;top:328.51px;font-size:7.9px;font-weight:700;color:#333;letter-spacing:-0.051px;">Threads</div>
<div class="t" id="T62" style="left:630.60px;top:328.51px;font-size:7.9px;font-weight:700;color:#333;letter-spacing:-0.049px;">Facebook</div>
<div class="t" id="T63" style="left:693.90px;top:328.51px;font-size:7.9px;font-weight:700;color:#333;letter-spacing:-0.065px;">YouTube</div>
<div class="t" id="T64" style="left:753.30px;top:328.51px;font-size:7.9px;font-weight:700;color:#333;letter-spacing:-0.062px;">TikTok</div>
<div class="t" id="T65" style="left:804.50px;top:328.51px;font-size:7.9px;font-weight:700;color:#333;letter-spacing:-0.063px;">Bluesky</div>
<div class="t" id="T66" style="left:861.30px;top:328.51px;font-size:7.9px;font-weight:700;color:#333;letter-spacing:0.384px;">X (Twitter)</div>
<div class="t" id="T67" style="left:929.70px;top:328.51px;font-size:7.9px;font-weight:700;color:#333;letter-spacing:0.201px;">Instagram</div>
<svg style="position:absolute;left:1236px;top:580px" width="44" height="40" viewBox="1236 580 44 40">
<circle cx="1256.2" cy="599.4" r="15" fill="#2f55a5"/>
<path d="M1250.6,592.2 H1261.6 Q1263.2,592.2 1263.2,593.8 V607 L1260.2,604.8 H1250.6 Q1249.2,604.8 1249.2,603.4 V593.6 Q1249.2,592.2 1250.6,592.2Z" fill="#fff"/>
<path d="M1251.8,600.4 Q1256.2,603 1260.6,600.4" fill="none" stroke="#2f55a5" stroke-width="0.9"/>
<circle cx="1271.7" cy="589.5" r="5.3" fill="#d9182d"/>
<path d="M1270.8,587.8 L1272.2,586.6 V592.2" fill="none" stroke="#fff" stroke-width="1.3"/>
</svg>
<div style="position:absolute;left:-4px;top:619px;width:7px;height:12px;border-radius:50%;background:#111"></div>
</body></html>
